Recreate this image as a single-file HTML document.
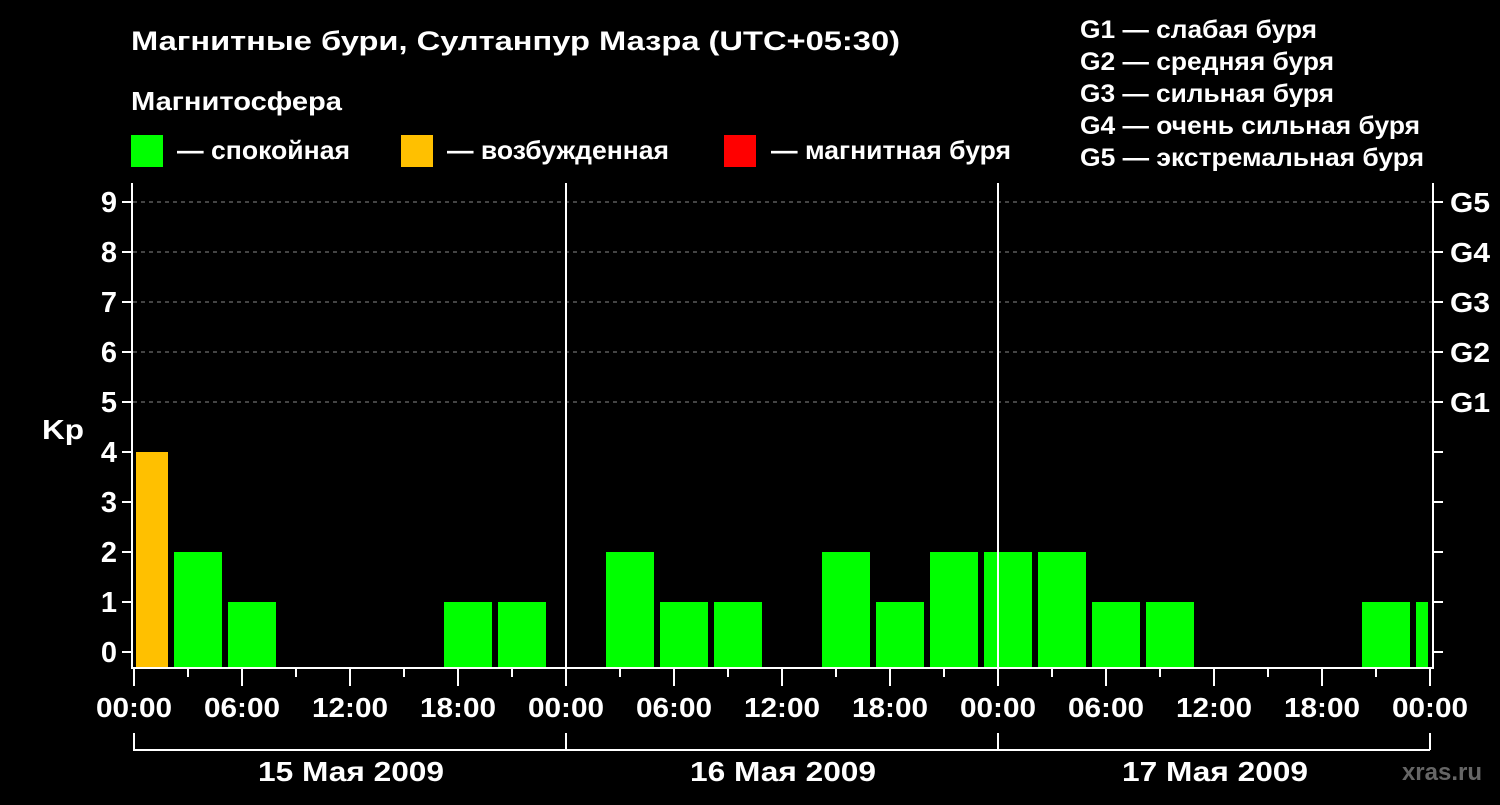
<!DOCTYPE html><html><head><meta charset="utf-8"><style>
body{margin:0;background:#000;width:1500px;height:800px;overflow:hidden;font-family:"Liberation Sans",sans-serif}
</style></head><body>
<svg width="1500" height="800" xmlns="http://www.w3.org/2000/svg" font-family="Liberation Sans, sans-serif" font-weight="bold" fill="#fff">
<text x="131" y="50" font-size="27" textLength="769" lengthAdjust="spacingAndGlyphs">Магнитные бури, Султанпур Мазра (UTC+05:30)</text>
<text x="131" y="110" font-size="26" textLength="211" lengthAdjust="spacingAndGlyphs">Магнитосфера</text>
<text x="177" y="159" font-size="26" textLength="173" lengthAdjust="spacingAndGlyphs">— спокойная</text>
<text x="447" y="159" font-size="26" textLength="222" lengthAdjust="spacingAndGlyphs">— возбужденная</text>
<text x="771" y="159" font-size="26" textLength="240" lengthAdjust="spacingAndGlyphs">— магнитная буря</text>
<g font-size="25"><text x="1080" y="38" textLength="237" lengthAdjust="spacingAndGlyphs">G1 — слабая буря</text><text x="1080" y="70" textLength="254" lengthAdjust="spacingAndGlyphs">G2 — средняя буря</text><text x="1080" y="102" textLength="254" lengthAdjust="spacingAndGlyphs">G3 — сильная буря</text><text x="1080" y="134" textLength="340" lengthAdjust="spacingAndGlyphs">G4 — очень сильная буря</text><text x="1080" y="166" textLength="344" lengthAdjust="spacingAndGlyphs">G5 — экстремальная буря</text></g>
<rect x="131" y="135" width="32" height="32" fill="#00ff00"/>
<rect x="401" y="135" width="32" height="32" fill="#ffc000"/>
<rect x="724" y="135" width="32" height="32" fill="#ff0000"/>
<g stroke="#888" stroke-dasharray="4,4" stroke-width="1">
<line x1="133" x2="1432" y1="202" y2="202"/><line x1="133" x2="1432" y1="252" y2="252"/><line x1="133" x2="1432" y1="302" y2="302"/><line x1="133" x2="1432" y1="352" y2="352"/><line x1="133" x2="1432" y1="402" y2="402"/></g>
<g fill="#ffc000"><rect x="136" y="452" width="32" height="215"/></g>
<g fill="#00ff00">
<rect x="174" y="552" width="48" height="115"/><rect x="228" y="602" width="48" height="65"/>
<rect x="444" y="602" width="48" height="65"/><rect x="498" y="602" width="48" height="65"/>
<rect x="606" y="552" width="48" height="115"/><rect x="660" y="602" width="48" height="65"/><rect x="714" y="602" width="48" height="65"/>
<rect x="822" y="552" width="48" height="115"/><rect x="876" y="602" width="48" height="65"/><rect x="930" y="552" width="48" height="115"/>
<rect x="984" y="552" width="48" height="115"/><rect x="1038" y="552" width="48" height="115"/><rect x="1092" y="602" width="48" height="65"/><rect x="1146" y="602" width="48" height="65"/>
<rect x="1362" y="602" width="48" height="65"/><rect x="1416" y="602" width="12" height="65"/></g>
<g stroke="#fff" stroke-width="2" fill="none">
<polyline points="132,183 132,668 1433,668 1433,183"/>
<line x1="566" y1="183" x2="566" y2="668"/><line x1="998" y1="183" x2="998" y2="668"/>
<path d="M122 202h10M122 252h10M122 302h10M122 352h10M122 402h10M122 452h10M122 502h10M122 552h10M122 602h10M122 652h10"/>
<path d="M1433 202h10M1433 252h10M1433 302h10M1433 352h10M1433 402h10M1433 452h10M1433 502h10M1433 552h10M1433 602h10M1433 652h10"/>
<path d="M134 668v18M242 668v18M350 668v18M458 668v18M566 668v18M674 668v18M782 668v18M890 668v18M998 668v18M1106 668v18M1214 668v18M1322 668v18M1430 668v18"/>
<path d="M188 668v9M296 668v9M404 668v9M512 668v9M620 668v9M728 668v9M836 668v9M944 668v9M1052 668v9M1160 668v9M1268 668v9M1376 668v9"/>
<path d="M134 733v17H1430M566 733v17M998 733v17M1430 733v17"/>
</g>
<g font-size="29" text-anchor="end"><text x="117" y="212">9</text><text x="117" y="262">8</text><text x="117" y="312">7</text><text x="117" y="362">6</text><text x="117" y="412">5</text><text x="117" y="462">4</text><text x="117" y="512">3</text><text x="117" y="562">2</text><text x="117" y="612">1</text><text x="117" y="662">0</text></g>
<text x="42" y="439" font-size="28" textLength="42" lengthAdjust="spacingAndGlyphs">Kp</text>
<g font-size="28"><text x="1450" y="212" textLength="40" lengthAdjust="spacingAndGlyphs">G5</text><text x="1450" y="262" textLength="40" lengthAdjust="spacingAndGlyphs">G4</text><text x="1450" y="312" textLength="40" lengthAdjust="spacingAndGlyphs">G3</text><text x="1450" y="362" textLength="40" lengthAdjust="spacingAndGlyphs">G2</text><text x="1450" y="412" textLength="40" lengthAdjust="spacingAndGlyphs">G1</text></g>
<g font-size="28">
<text x="96" y="717" textLength="76" lengthAdjust="spacingAndGlyphs">00:00</text><text x="204" y="717" textLength="76" lengthAdjust="spacingAndGlyphs">06:00</text><text x="312" y="717" textLength="76" lengthAdjust="spacingAndGlyphs">12:00</text><text x="420" y="717" textLength="76" lengthAdjust="spacingAndGlyphs">18:00</text><text x="528" y="717" textLength="76" lengthAdjust="spacingAndGlyphs">00:00</text><text x="636" y="717" textLength="76" lengthAdjust="spacingAndGlyphs">06:00</text><text x="744" y="717" textLength="76" lengthAdjust="spacingAndGlyphs">12:00</text><text x="852" y="717" textLength="76" lengthAdjust="spacingAndGlyphs">18:00</text><text x="960" y="717" textLength="76" lengthAdjust="spacingAndGlyphs">00:00</text><text x="1068" y="717" textLength="76" lengthAdjust="spacingAndGlyphs">06:00</text><text x="1176" y="717" textLength="76" lengthAdjust="spacingAndGlyphs">12:00</text><text x="1284" y="717" textLength="76" lengthAdjust="spacingAndGlyphs">18:00</text><text x="1392" y="717" textLength="76" lengthAdjust="spacingAndGlyphs">00:00</text></g>
<g font-size="28"><text x="258" y="781" textLength="186" lengthAdjust="spacingAndGlyphs">15 Мая 2009</text><text x="690" y="781" textLength="186" lengthAdjust="spacingAndGlyphs">16 Мая 2009</text><text x="1122" y="781" textLength="186" lengthAdjust="spacingAndGlyphs">17 Мая 2009</text></g>
<text x="1482" y="780" font-size="24" text-anchor="end" fill="#666">xras.ru</text>
</svg></body></html>
